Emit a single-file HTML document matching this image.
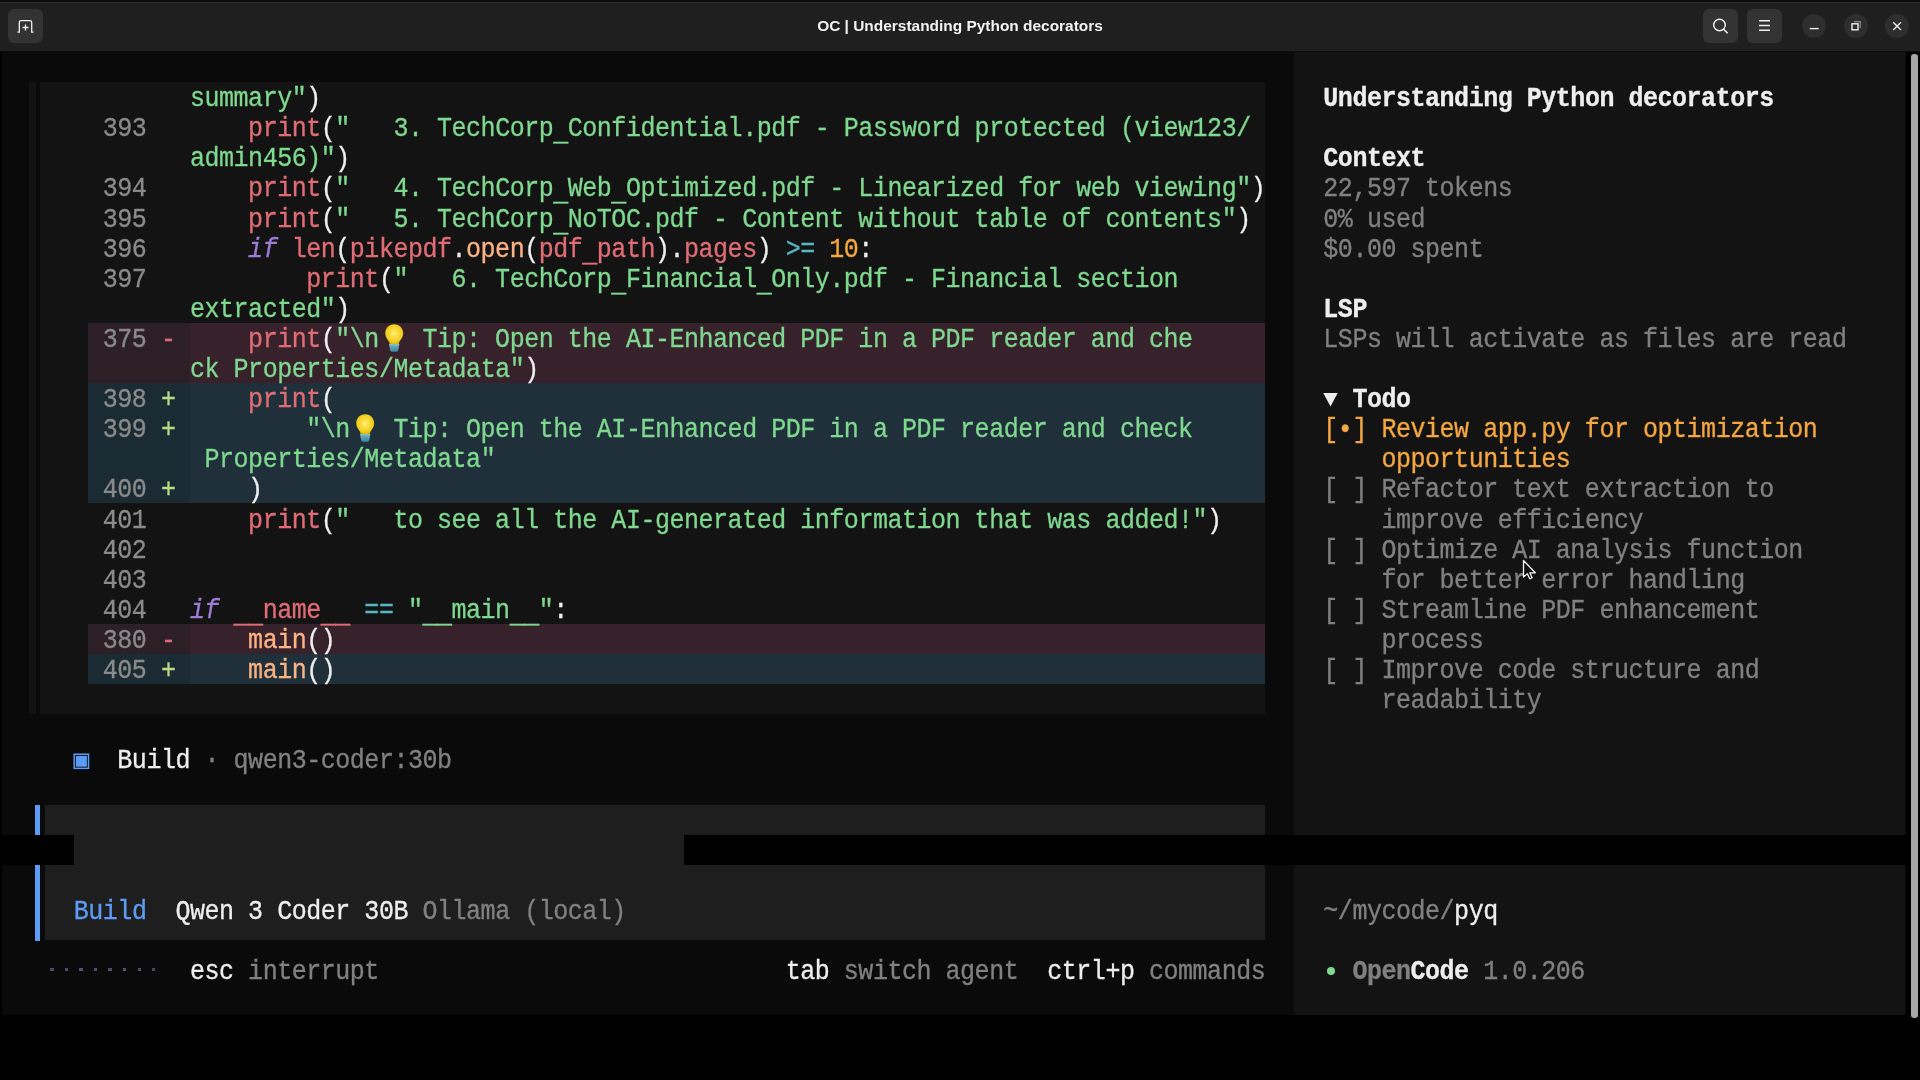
<!DOCTYPE html>
<html><head><meta charset="utf-8"><title>OC | Understanding Python decorators</title>
<style>
html,body{margin:0;padding:0;background:#000;}
body{width:1920px;height:1080px;overflow:hidden;position:relative;font-family:"Liberation Mono",monospace;}
.r{position:absolute;}
#all{position:absolute;left:0;top:0;width:1920px;height:1080px;overflow:hidden;filter:blur(0.4px);}
#term{position:absolute;left:0;top:0;width:1920px;height:1080px;}
.t{position:absolute;white-space:pre;font-family:"Liberation Mono",monospace;font-size:25.0px;letter-spacing:-0.470px;line-height:30.1px;height:30.1px;padding-top:2.7px;box-sizing:content-box;transform:scaleY(1.08);transform-origin:0 21.67px;-webkit-text-stroke:0.3px currentColor;}
.b{font-weight:bold;}
.u{margin-top:4px;}
.i{font-style:italic;}
#tb{position:absolute;left:0;top:0;width:1920px;height:52px;background:#0c0c0c;}
#tb .bar{position:absolute;left:0;top:2px;width:1920px;height:48.500px;background:#1f1f1f;border-top:1.500px solid #2b2b2b;box-sizing:border-box;}
#tb .title{position:absolute;left:0;top:2px;width:1920px;height:48px;line-height:48px;text-align:center;color:#f2f2f2;font-family:"Liberation Sans",sans-serif;font-weight:bold;font-size:15.45px;}
.btn{position:absolute;background:#333333;border-radius:6px;}
.cir{position:absolute;background:#2e2e2e;border-radius:50%;width:24px;height:24px;}
</style></head><body>
<div id="all">
<svg width="0" height="0" style="position:absolute"><defs><radialGradient id="bg1" cx="50%" cy="46%" r="56%"><stop offset="0" stop-color="#fff08c"/><stop offset="0.28" stop-color="#fbe04a"/><stop offset="0.75" stop-color="#f2cf1f"/><stop offset="1" stop-color="#d9a800"/></radialGradient><linearGradient id="bg2" x1="0" y1="0" x2="0" y2="1"><stop offset="0" stop-color="#8fc4cc"/><stop offset="0.35" stop-color="#5fa3b6"/><stop offset="1" stop-color="#3f86a0"/></linearGradient></defs></svg>
<div id="tb"><div class="bar"></div><div class="title">OC | Understanding Python decorators</div>
<div class="btn" style="left:8px;top:9px;width:35px;height:34px"></div>
<svg class="r" style="left:8px;top:9px" width="35" height="34" viewBox="0 0 35 34"><path d="M9.500 23.200h1.800V13.500q0-1.800 1.800-1.800h8.800q1.800 0 1.800 1.800v9.700h1.800" fill="none" stroke="#f0f0f0" stroke-width="1.300"/><path d="M17.500 15.500v6M14.500 18.500h6" stroke="#f0f0f0" stroke-width="1.300"/></svg>
<div class="btn" style="left:1703px;top:9px;width:35px;height:34px"></div>
<svg class="r" style="left:1703px;top:9px" width="35" height="34" viewBox="0 0 35 34"><circle cx="16.500" cy="16" r="5.800" fill="none" stroke="#f0f0f0" stroke-width="1.400"/><path d="M20.600 20.200l3.600 3.600" stroke="#f0f0f0" stroke-width="1.600" stroke-linecap="round"/></svg>
<div class="btn" style="left:1747px;top:9px;width:35px;height:34px"></div>
<svg class="r" style="left:1747px;top:9px" width="35" height="34" viewBox="0 0 35 34"><path d="M12 11.800h11M12 16.500h11M12 21.200h11" stroke="#f0f0f0" stroke-width="1.400"/></svg>
<div class="cir" style="left:1802px;top:14.300px"></div>
<svg class="r" style="left:1802px;top:14.300px" width="24" height="24" viewBox="0 0 24 24"><path d="M7.700 14.600h9" stroke="#f0f0f0" stroke-width="1.400"/></svg>
<div class="cir" style="left:1843.800px;top:14.300px"></div>
<svg class="r" style="left:1843.800px;top:14.300px" width="24" height="24" viewBox="0 0 24 24"><rect x="8" y="9.800" width="6" height="6" fill="none" stroke="#f0f0f0" stroke-width="1.400"/><path d="M10 7.700h6.200v6.200" fill="none" stroke="#8a8a8a" stroke-width="1.200"/></svg>
<div class="cir" style="left:1885px;top:14.300px"></div>
<svg class="r" style="left:1885px;top:14.300px" width="24" height="24" viewBox="0 0 24 24"><path d="M8.200 8.200l7.800 7.800M16 8.200l-7.800 7.800" stroke="#f0f0f0" stroke-width="1.400"/></svg>
</div>
<div id="term">
<div class="r" style="left:1.50px;top:52.00px;width:1904.50px;height:963.20px;background:#0a0a0a;"></div>
<div class="r" style="left:1294.27px;top:52.00px;width:610.26px;height:963.20px;background:#131313;"></div>
<div class="r" style="left:28.96px;top:82.10px;width:1236.25px;height:632.10px;background:#131313;"></div>
<div class="r" style="left:36.10px;top:82.10px;width:3.90px;height:632.10px;background:#0a0a0a;"></div>
<div class="r" style="left:88.28px;top:322.90px;width:101.71px;height:60.20px;background:#2d1f26;"></div>
<div class="r" style="left:189.99px;top:322.90px;width:1075.22px;height:60.20px;background:#37222c;"></div>
<div class="r" style="left:88.28px;top:383.10px;width:101.71px;height:120.40px;background:#1b2b34;"></div>
<div class="r" style="left:189.99px;top:383.10px;width:1075.22px;height:120.40px;background:#20303b;"></div>
<div class="r" style="left:88.28px;top:623.90px;width:101.71px;height:30.10px;background:#2d1f26;"></div>
<div class="r" style="left:189.99px;top:623.90px;width:1075.22px;height:30.10px;background:#37222c;"></div>
<div class="r" style="left:88.28px;top:654.00px;width:101.71px;height:30.10px;background:#1b2b34;"></div>
<div class="r" style="left:189.99px;top:654.00px;width:1075.22px;height:30.10px;background:#20303b;"></div>
<div class="r" style="left:44.69px;top:804.50px;width:1220.52px;height:30.10px;background:#1e1e1e;"></div>
<div class="r" style="left:44.69px;top:834.60px;width:1220.52px;height:105.35px;background:#1e1e1e;"></div>
<div class="r" style="left:34.90px;top:804.50px;width:5.20px;height:136.65px;background:#5c9cf5;"></div>
<div class="r" style="left:0.00px;top:834.60px;width:73.75px;height:30.10px;background:#000;"></div>
<div class="r" style="left:684.01px;top:834.60px;width:1221.99px;height:30.10px;background:#000;"></div>
<span class="t " style="left:189.99px;top:82.10px;color:#7fd88f">summary&quot;</span>
<span class="t " style="left:306.23px;top:82.10px;color:#eeeeee">)</span>
<span class="t " style="left:102.81px;top:112.20px;color:#8a8a8a">393</span>
<span class="t " style="left:248.11px;top:112.20px;color:#e06c75">print</span>
<span class="t " style="left:320.76px;top:112.20px;color:#eeeeee">(</span>
<span class="t " style="left:335.29px;top:112.20px;color:#7fd88f">&quot;</span>
<span class="t " style="left:393.41px;top:112.20px;color:#7fd88f">3.</span>
<span class="t " style="left:437.00px;top:112.20px;color:#7fd88f">TechCorp</span>
<span class="t  u" style="left:553.24px;top:112.20px;color:#7fd88f">_</span>
<span class="t " style="left:567.77px;top:112.20px;color:#7fd88f">Confidential.pdf</span>
<span class="t " style="left:814.78px;top:112.20px;color:#7fd88f">-</span>
<span class="t " style="left:843.84px;top:112.20px;color:#7fd88f">Password</span>
<span class="t " style="left:974.61px;top:112.20px;color:#7fd88f">protected</span>
<span class="t " style="left:1119.91px;top:112.20px;color:#7fd88f">(view123/</span>
<span class="t " style="left:189.99px;top:142.30px;color:#7fd88f">admin456)&quot;</span>
<span class="t " style="left:335.29px;top:142.30px;color:#eeeeee">)</span>
<span class="t " style="left:102.81px;top:172.40px;color:#8a8a8a">394</span>
<span class="t " style="left:248.11px;top:172.40px;color:#e06c75">print</span>
<span class="t " style="left:320.76px;top:172.40px;color:#eeeeee">(</span>
<span class="t " style="left:335.29px;top:172.40px;color:#7fd88f">&quot;</span>
<span class="t " style="left:393.41px;top:172.40px;color:#7fd88f">4.</span>
<span class="t " style="left:437.00px;top:172.40px;color:#7fd88f">TechCorp</span>
<span class="t  u" style="left:553.24px;top:172.40px;color:#7fd88f">_</span>
<span class="t " style="left:567.77px;top:172.40px;color:#7fd88f">Web</span>
<span class="t  u" style="left:611.36px;top:172.40px;color:#7fd88f">_</span>
<span class="t " style="left:625.89px;top:172.40px;color:#7fd88f">Optimized.pdf</span>
<span class="t " style="left:829.31px;top:172.40px;color:#7fd88f">-</span>
<span class="t " style="left:858.37px;top:172.40px;color:#7fd88f">Linearized</span>
<span class="t " style="left:1018.20px;top:172.40px;color:#7fd88f">for</span>
<span class="t " style="left:1076.32px;top:172.40px;color:#7fd88f">web</span>
<span class="t " style="left:1134.44px;top:172.40px;color:#7fd88f">viewing&quot;</span>
<span class="t " style="left:1250.68px;top:172.40px;color:#eeeeee">)</span>
<span class="t " style="left:102.81px;top:202.50px;color:#8a8a8a">395</span>
<span class="t " style="left:248.11px;top:202.50px;color:#e06c75">print</span>
<span class="t " style="left:320.76px;top:202.50px;color:#eeeeee">(</span>
<span class="t " style="left:335.29px;top:202.50px;color:#7fd88f">&quot;</span>
<span class="t " style="left:393.41px;top:202.50px;color:#7fd88f">5.</span>
<span class="t " style="left:437.00px;top:202.50px;color:#7fd88f">TechCorp</span>
<span class="t  u" style="left:553.24px;top:202.50px;color:#7fd88f">_</span>
<span class="t " style="left:567.77px;top:202.50px;color:#7fd88f">NoTOC.pdf</span>
<span class="t " style="left:713.07px;top:202.50px;color:#7fd88f">-</span>
<span class="t " style="left:742.13px;top:202.50px;color:#7fd88f">Content</span>
<span class="t " style="left:858.37px;top:202.50px;color:#7fd88f">without</span>
<span class="t " style="left:974.61px;top:202.50px;color:#7fd88f">table</span>
<span class="t " style="left:1061.79px;top:202.50px;color:#7fd88f">of</span>
<span class="t " style="left:1105.38px;top:202.50px;color:#7fd88f">contents&quot;</span>
<span class="t " style="left:1236.15px;top:202.50px;color:#eeeeee">)</span>
<span class="t " style="left:102.81px;top:232.60px;color:#8a8a8a">396</span>
<span class="t i" style="left:248.11px;top:232.60px;color:#9d7cd8">if</span>
<span class="t " style="left:291.70px;top:232.60px;color:#e06c75">len</span>
<span class="t " style="left:335.29px;top:232.60px;color:#eeeeee">(</span>
<span class="t " style="left:349.82px;top:232.60px;color:#e06c75">pikepdf</span>
<span class="t " style="left:451.53px;top:232.60px;color:#eeeeee">.</span>
<span class="t " style="left:466.06px;top:232.60px;color:#fab283">open</span>
<span class="t " style="left:524.18px;top:232.60px;color:#eeeeee">(</span>
<span class="t " style="left:538.71px;top:232.60px;color:#e06c75">pdf</span>
<span class="t  u" style="left:582.30px;top:232.60px;color:#e06c75">_</span>
<span class="t " style="left:596.83px;top:232.60px;color:#e06c75">path</span>
<span class="t " style="left:654.95px;top:232.60px;color:#eeeeee">)</span>
<span class="t " style="left:669.48px;top:232.60px;color:#eeeeee">.</span>
<span class="t " style="left:684.01px;top:232.60px;color:#e06c75">pages</span>
<span class="t " style="left:756.66px;top:232.60px;color:#eeeeee">)</span>
<span class="t " style="left:785.72px;top:232.60px;color:#56b6c2">&gt;=</span>
<span class="t " style="left:829.31px;top:232.60px;color:#f5a742">10</span>
<span class="t " style="left:858.37px;top:232.60px;color:#eeeeee">:</span>
<span class="t " style="left:102.81px;top:262.70px;color:#8a8a8a">397</span>
<span class="t " style="left:306.23px;top:262.70px;color:#e06c75">print</span>
<span class="t " style="left:378.88px;top:262.70px;color:#eeeeee">(</span>
<span class="t " style="left:393.41px;top:262.70px;color:#7fd88f">&quot;</span>
<span class="t " style="left:451.53px;top:262.70px;color:#7fd88f">6.</span>
<span class="t " style="left:495.12px;top:262.70px;color:#7fd88f">TechCorp</span>
<span class="t  u" style="left:611.36px;top:262.70px;color:#7fd88f">_</span>
<span class="t " style="left:625.89px;top:262.70px;color:#7fd88f">Financial</span>
<span class="t  u" style="left:756.66px;top:262.70px;color:#7fd88f">_</span>
<span class="t " style="left:771.19px;top:262.70px;color:#7fd88f">Only.pdf</span>
<span class="t " style="left:901.96px;top:262.70px;color:#7fd88f">-</span>
<span class="t " style="left:931.02px;top:262.70px;color:#7fd88f">Financial</span>
<span class="t " style="left:1076.32px;top:262.70px;color:#7fd88f">section</span>
<span class="t " style="left:189.99px;top:292.80px;color:#7fd88f">extracted&quot;</span>
<span class="t " style="left:335.29px;top:292.80px;color:#eeeeee">)</span>
<span class="t " style="left:102.81px;top:322.90px;color:#8a8a8a">375</span>
<span class="t " style="left:160.93px;top:322.90px;color:#e26a75">-</span>
<span class="t " style="left:248.11px;top:322.90px;color:#e06c75">print</span>
<span class="t " style="left:320.76px;top:322.90px;color:#eeeeee">(</span>
<span class="t " style="left:335.29px;top:322.90px;color:#7fd88f">&quot;\n</span>
<svg class="r" style="left:385.38px;top:323.80px" width="18.4" height="28.2" viewBox="0 0 18.4 28.2"><path d="M9.200 0.300C3.900 0.300 0.200 4.200 0.200 9.200c0 3.200 1.600 5.300 3 7.200 0.900 1.200 1.300 2.400 1.400 3.900h9.200c0.100-1.500 0.500-2.700 1.400-3.900 1.400-1.900 3-4 3-7.200C18.200 4.200 14.500 0.300 9.200 0.300z" fill="url(#bg1)"/><path d="M4 20h10.400l-1.100 6.200q-0.200 1.500-1.700 1.500H6.800q-1.500 0-1.700-1.500z" fill="url(#bg2)"/></svg>
<span class="t " style="left:422.47px;top:322.90px;color:#7fd88f">Tip:</span>
<span class="t " style="left:495.12px;top:322.90px;color:#7fd88f">Open</span>
<span class="t " style="left:567.77px;top:322.90px;color:#7fd88f">the</span>
<span class="t " style="left:625.89px;top:322.90px;color:#7fd88f">AI-Enhanced</span>
<span class="t " style="left:800.25px;top:322.90px;color:#7fd88f">PDF</span>
<span class="t " style="left:858.37px;top:322.90px;color:#7fd88f">in</span>
<span class="t " style="left:901.96px;top:322.90px;color:#7fd88f">a</span>
<span class="t " style="left:931.02px;top:322.90px;color:#7fd88f">PDF</span>
<span class="t " style="left:989.14px;top:322.90px;color:#7fd88f">reader</span>
<span class="t " style="left:1090.85px;top:322.90px;color:#7fd88f">and</span>
<span class="t " style="left:1148.97px;top:322.90px;color:#7fd88f">che</span>
<span class="t " style="left:189.99px;top:353.00px;color:#7fd88f">ck</span>
<span class="t " style="left:233.58px;top:353.00px;color:#7fd88f">Properties/Metadata&quot;</span>
<span class="t " style="left:524.18px;top:353.00px;color:#eeeeee">)</span>
<span class="t " style="left:102.81px;top:383.10px;color:#8a8a8a">398</span>
<span class="t " style="left:160.93px;top:383.10px;color:#b8db87">+</span>
<span class="t " style="left:248.11px;top:383.10px;color:#e06c75">print</span>
<span class="t " style="left:320.76px;top:383.10px;color:#eeeeee">(</span>
<span class="t " style="left:102.81px;top:413.20px;color:#8a8a8a">399</span>
<span class="t " style="left:160.93px;top:413.20px;color:#b8db87">+</span>
<span class="t " style="left:306.23px;top:413.20px;color:#7fd88f">&quot;\n</span>
<svg class="r" style="left:356.32px;top:414.10px" width="18.4" height="28.2" viewBox="0 0 18.4 28.2"><path d="M9.200 0.300C3.900 0.300 0.200 4.200 0.200 9.200c0 3.200 1.600 5.300 3 7.200 0.900 1.200 1.300 2.400 1.400 3.900h9.200c0.100-1.500 0.500-2.700 1.400-3.900 1.400-1.900 3-4 3-7.200C18.200 4.200 14.500 0.300 9.200 0.300z" fill="url(#bg1)"/><path d="M4 20h10.400l-1.100 6.200q-0.200 1.500-1.700 1.500H6.800q-1.500 0-1.700-1.500z" fill="url(#bg2)"/></svg>
<span class="t " style="left:393.41px;top:413.20px;color:#7fd88f">Tip:</span>
<span class="t " style="left:466.06px;top:413.20px;color:#7fd88f">Open</span>
<span class="t " style="left:538.71px;top:413.20px;color:#7fd88f">the</span>
<span class="t " style="left:596.83px;top:413.20px;color:#7fd88f">AI-Enhanced</span>
<span class="t " style="left:771.19px;top:413.20px;color:#7fd88f">PDF</span>
<span class="t " style="left:829.31px;top:413.20px;color:#7fd88f">in</span>
<span class="t " style="left:872.90px;top:413.20px;color:#7fd88f">a</span>
<span class="t " style="left:901.96px;top:413.20px;color:#7fd88f">PDF</span>
<span class="t " style="left:960.08px;top:413.20px;color:#7fd88f">reader</span>
<span class="t " style="left:1061.79px;top:413.20px;color:#7fd88f">and</span>
<span class="t " style="left:1119.91px;top:413.20px;color:#7fd88f">check</span>
<span class="t " style="left:204.52px;top:443.30px;color:#7fd88f">Properties/Metadata&quot;</span>
<span class="t " style="left:102.81px;top:473.40px;color:#8a8a8a">400</span>
<span class="t " style="left:160.93px;top:473.40px;color:#b8db87">+</span>
<span class="t " style="left:248.11px;top:473.40px;color:#eeeeee">)</span>
<span class="t " style="left:102.81px;top:503.50px;color:#8a8a8a">401</span>
<span class="t " style="left:248.11px;top:503.50px;color:#e06c75">print</span>
<span class="t " style="left:320.76px;top:503.50px;color:#eeeeee">(</span>
<span class="t " style="left:335.29px;top:503.50px;color:#7fd88f">&quot;</span>
<span class="t " style="left:393.41px;top:503.50px;color:#7fd88f">to</span>
<span class="t " style="left:437.00px;top:503.50px;color:#7fd88f">see</span>
<span class="t " style="left:495.12px;top:503.50px;color:#7fd88f">all</span>
<span class="t " style="left:553.24px;top:503.50px;color:#7fd88f">the</span>
<span class="t " style="left:611.36px;top:503.50px;color:#7fd88f">AI-generated</span>
<span class="t " style="left:800.25px;top:503.50px;color:#7fd88f">information</span>
<span class="t " style="left:974.61px;top:503.50px;color:#7fd88f">that</span>
<span class="t " style="left:1047.26px;top:503.50px;color:#7fd88f">was</span>
<span class="t " style="left:1105.38px;top:503.50px;color:#7fd88f">added!&quot;</span>
<span class="t " style="left:1207.09px;top:503.50px;color:#eeeeee">)</span>
<span class="t " style="left:102.81px;top:533.60px;color:#8a8a8a">402</span>
<span class="t " style="left:102.81px;top:563.70px;color:#8a8a8a">403</span>
<span class="t " style="left:102.81px;top:593.80px;color:#8a8a8a">404</span>
<span class="t i" style="left:189.99px;top:593.80px;color:#9d7cd8">if</span>
<span class="t  u" style="left:233.58px;top:593.80px;color:#e06c75">__</span>
<span class="t " style="left:262.64px;top:593.80px;color:#e06c75">name</span>
<span class="t  u" style="left:320.76px;top:593.80px;color:#e06c75">__</span>
<span class="t " style="left:364.35px;top:593.80px;color:#56b6c2">==</span>
<span class="t " style="left:407.94px;top:593.80px;color:#7fd88f">&quot;</span>
<span class="t  u" style="left:422.47px;top:593.80px;color:#7fd88f">__</span>
<span class="t " style="left:451.53px;top:593.80px;color:#7fd88f">main</span>
<span class="t  u" style="left:509.65px;top:593.80px;color:#7fd88f">__</span>
<span class="t " style="left:538.71px;top:593.80px;color:#7fd88f">&quot;</span>
<span class="t " style="left:553.24px;top:593.80px;color:#eeeeee">:</span>
<span class="t " style="left:102.81px;top:623.90px;color:#8a8a8a">380</span>
<span class="t " style="left:160.93px;top:623.90px;color:#e26a75">-</span>
<span class="t " style="left:248.11px;top:623.90px;color:#fab283">main</span>
<span class="t " style="left:306.23px;top:623.90px;color:#eeeeee">()</span>
<span class="t " style="left:102.81px;top:654.00px;color:#8a8a8a">405</span>
<span class="t " style="left:160.93px;top:654.00px;color:#b8db87">+</span>
<span class="t " style="left:248.11px;top:654.00px;color:#fab283">main</span>
<span class="t " style="left:306.23px;top:654.00px;color:#eeeeee">()</span>
<svg class="r" style="left:72.75px;top:744.30px" width="18" height="30" viewBox="0 0 18 30"><rect x="1.200" y="10.250" width="14.300" height="14.100" fill="none" stroke="#5c9cf5" stroke-width="1.500"/><rect x="2.850" y="11.900" width="11" height="10.800" fill="#5c9cf5"/></svg>
<span class="t " style="left:117.34px;top:744.30px;color:#eeeeee">Build</span>
<span class="t " style="left:204.52px;top:744.30px;color:#808080">·</span>
<span class="t " style="left:233.58px;top:744.30px;color:#808080">qwen3-coder:30b</span>
<span class="t " style="left:73.75px;top:894.80px;color:#5c9cf5">Build</span>
<span class="t " style="left:175.46px;top:894.80px;color:#eeeeee">Qwen</span>
<span class="t " style="left:248.11px;top:894.80px;color:#eeeeee">3</span>
<span class="t " style="left:277.17px;top:894.80px;color:#eeeeee">Coder</span>
<span class="t " style="left:364.35px;top:894.80px;color:#eeeeee">30B</span>
<span class="t " style="left:422.47px;top:894.80px;color:#808080">Ollama</span>
<span class="t " style="left:524.18px;top:894.80px;color:#808080">(local)</span>
<div class="r" style="left:50.35px;top:968.15px;width:3.20px;height:3.20px;background:#444a60;"></div>
<div class="r" style="left:64.89px;top:968.15px;width:3.20px;height:3.20px;background:#4a5069;"></div>
<div class="r" style="left:79.42px;top:968.15px;width:3.20px;height:3.20px;background:#4d546e;"></div>
<div class="r" style="left:93.95px;top:968.15px;width:3.20px;height:3.20px;background:#4a5069;"></div>
<div class="r" style="left:108.48px;top:968.15px;width:3.20px;height:3.20px;background:#4a5069;"></div>
<div class="r" style="left:123.01px;top:968.15px;width:3.20px;height:3.20px;background:#4d546e;"></div>
<div class="r" style="left:137.53px;top:968.15px;width:3.20px;height:3.20px;background:#4a5069;"></div>
<div class="r" style="left:152.06px;top:968.15px;width:3.20px;height:3.20px;background:#444a60;"></div>
<span class="t " style="left:189.99px;top:955.00px;color:#eeeeee">esc</span>
<span class="t " style="left:248.11px;top:955.00px;color:#808080">interrupt</span>
<span class="t " style="left:785.72px;top:955.00px;color:#eeeeee">tab</span>
<span class="t " style="left:843.84px;top:955.00px;color:#808080">switch</span>
<span class="t " style="left:945.55px;top:955.00px;color:#808080">agent</span>
<span class="t " style="left:1047.26px;top:955.00px;color:#eeeeee">ctrl+p</span>
<span class="t " style="left:1148.97px;top:955.00px;color:#808080">commands</span>
<span class="t b" style="left:1323.33px;top:82.10px;color:#eeeeee">Understanding</span>
<span class="t b" style="left:1526.75px;top:82.10px;color:#eeeeee">Python</span>
<span class="t b" style="left:1628.46px;top:82.10px;color:#eeeeee">decorators</span>
<span class="t b" style="left:1323.33px;top:142.30px;color:#eeeeee">Context</span>
<span class="t " style="left:1323.33px;top:172.40px;color:#808080">22,597</span>
<span class="t " style="left:1425.04px;top:172.40px;color:#808080">tokens</span>
<span class="t " style="left:1323.33px;top:202.50px;color:#808080">0%</span>
<span class="t " style="left:1366.92px;top:202.50px;color:#808080">used</span>
<span class="t " style="left:1323.33px;top:232.60px;color:#808080">$0.00</span>
<span class="t " style="left:1410.51px;top:232.60px;color:#808080">spent</span>
<span class="t b" style="left:1323.33px;top:292.80px;color:#eeeeee">LSP</span>
<span class="t " style="left:1323.33px;top:322.90px;color:#808080">LSPs</span>
<span class="t " style="left:1395.98px;top:322.90px;color:#808080">will</span>
<span class="t " style="left:1468.63px;top:322.90px;color:#808080">activate</span>
<span class="t " style="left:1599.40px;top:322.90px;color:#808080">as</span>
<span class="t " style="left:1642.99px;top:322.90px;color:#808080">files</span>
<span class="t " style="left:1730.17px;top:322.90px;color:#808080">are</span>
<span class="t " style="left:1788.29px;top:322.90px;color:#808080">read</span>
<svg class="r" style="left:1323.33px;top:383.10px" width="15" height="30" viewBox="0 0 15 30"><path d="M0.300 10h14.400L7.500 23.600z" fill="#eeeeee"/></svg>
<span class="t b" style="left:1352.39px;top:383.10px;color:#eeeeee">Todo</span>
<span class="t " style="left:1323.33px;top:413.20px;color:#f5a742">[•]</span>
<span class="t " style="left:1381.45px;top:413.20px;color:#f5a742">Review</span>
<span class="t " style="left:1483.16px;top:413.20px;color:#f5a742">app.py</span>
<span class="t " style="left:1584.87px;top:413.20px;color:#f5a742">for</span>
<span class="t " style="left:1642.99px;top:413.20px;color:#f5a742">optimization</span>
<span class="t " style="left:1381.45px;top:443.30px;color:#f5a742">opportunities</span>
<span class="t " style="left:1323.33px;top:473.40px;color:#808080">[</span>
<span class="t " style="left:1352.39px;top:473.40px;color:#808080">]</span>
<span class="t " style="left:1381.45px;top:473.40px;color:#808080">Refactor</span>
<span class="t " style="left:1512.22px;top:473.40px;color:#808080">text</span>
<span class="t " style="left:1584.87px;top:473.40px;color:#808080">extraction</span>
<span class="t " style="left:1744.70px;top:473.40px;color:#808080">to</span>
<span class="t " style="left:1381.45px;top:503.50px;color:#808080">improve</span>
<span class="t " style="left:1497.69px;top:503.50px;color:#808080">efficiency</span>
<span class="t " style="left:1323.33px;top:533.60px;color:#808080">[</span>
<span class="t " style="left:1352.39px;top:533.60px;color:#808080">]</span>
<span class="t " style="left:1381.45px;top:533.60px;color:#808080">Optimize</span>
<span class="t " style="left:1512.22px;top:533.60px;color:#808080">AI</span>
<span class="t " style="left:1555.81px;top:533.60px;color:#808080">analysis</span>
<span class="t " style="left:1686.58px;top:533.60px;color:#808080">function</span>
<span class="t " style="left:1381.45px;top:563.70px;color:#808080">for</span>
<span class="t " style="left:1439.57px;top:563.70px;color:#808080">better</span>
<span class="t " style="left:1541.28px;top:563.70px;color:#808080">error</span>
<span class="t " style="left:1628.46px;top:563.70px;color:#808080">handling</span>
<span class="t " style="left:1323.33px;top:593.80px;color:#808080">[</span>
<span class="t " style="left:1352.39px;top:593.80px;color:#808080">]</span>
<span class="t " style="left:1381.45px;top:593.80px;color:#808080">Streamline</span>
<span class="t " style="left:1541.28px;top:593.80px;color:#808080">PDF</span>
<span class="t " style="left:1599.40px;top:593.80px;color:#808080">enhancement</span>
<span class="t " style="left:1381.45px;top:623.90px;color:#808080">process</span>
<span class="t " style="left:1323.33px;top:654.00px;color:#808080">[</span>
<span class="t " style="left:1352.39px;top:654.00px;color:#808080">]</span>
<span class="t " style="left:1381.45px;top:654.00px;color:#808080">Improve</span>
<span class="t " style="left:1497.69px;top:654.00px;color:#808080">code</span>
<span class="t " style="left:1570.34px;top:654.00px;color:#808080">structure</span>
<span class="t " style="left:1715.64px;top:654.00px;color:#808080">and</span>
<span class="t " style="left:1381.45px;top:684.10px;color:#808080">readability</span>
<span class="t " style="left:1323.33px;top:894.80px;color:#808080">~/mycode/</span>
<span class="t " style="left:1454.10px;top:894.80px;color:#eeeeee">pyq</span>
<div class="r" style="left:1326.60px;top:966.55px;width:8px;height:8px;border-radius:50%;background:#7fd88f"></div>
<span class="t b" style="left:1352.39px;top:955.00px;color:#808080">Open</span>
<span class="t b" style="left:1410.51px;top:955.00px;color:#eeeeee">Code</span>
<span class="t " style="left:1483.16px;top:955.00px;color:#808080">1.0.206</span>
</div>
<!-- scrollbar -->
<div class="r" style="left:1911.400px;top:54px;width:6.400px;height:964px;background:#a6a6a6;border-radius:3.200px"></div>
<!-- mouse cursor -->
<svg class="r" style="left:1521.500px;top:559px" width="18" height="24" viewBox="0 0 18 24"><path d="M1.500 1.500v16.600l3.900-3.300 2.300 5 2.400-1.100-2.300-4.900h5.500z" fill="#111" stroke="#f4f4f4" stroke-width="1.300" stroke-linejoin="round"/></svg>
</div>
</body></html>
